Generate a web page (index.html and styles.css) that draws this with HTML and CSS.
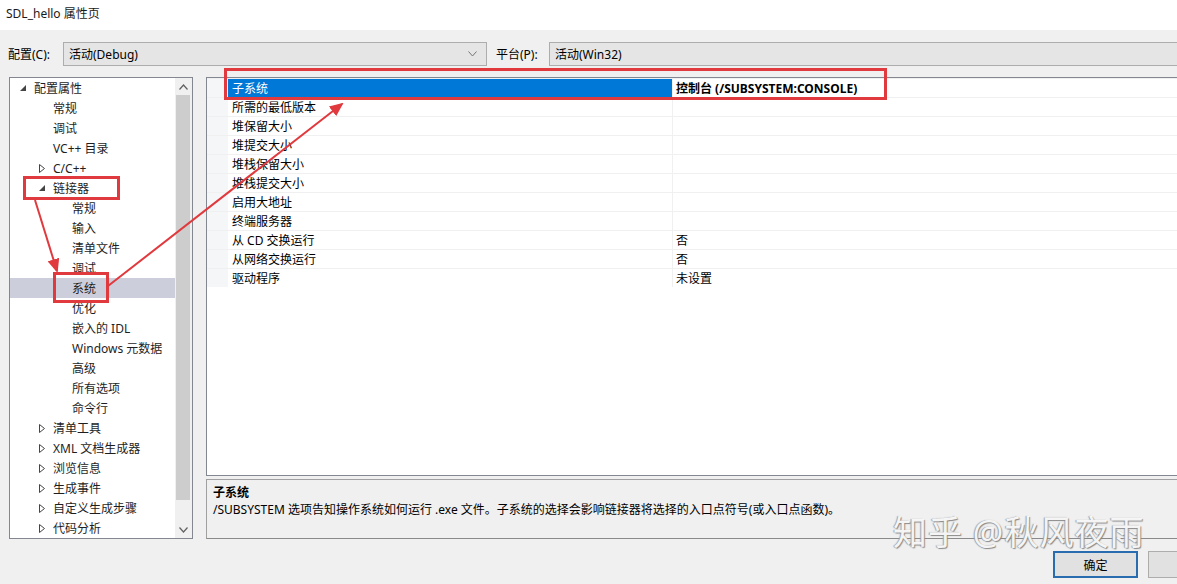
FILE: index.html
```html
<!DOCTYPE html>
<html lang="zh-CN">
<head>
  <meta charset="UTF-8">
  <title>SDL_hello 属性页</title>
  <link rel="stylesheet" href="styles.css">
</head>
<body>
  <div class="titlebar">SDL_hello 属性页</div>

  <div class="dialog">
    <div class="config-row">
      <span class="label">配置(C):</span>
      <div class="combo combo-config">
        <span>活动(Debug)</span>
        <svg class="chev" width="9" height="6" viewBox="0 0 9 6"><polyline points="0.5,0.5 4.5,5 8.5,0.5" fill="none" stroke="#777" stroke-width="1"/></svg>
      </div>
      <span class="label label-platform">平台(P):</span>
      <div class="combo combo-platform"><span>活动(Win32)</span></div>
    </div>

    <div class="main">
      <div class="tree">
        <div class="tree-list">
          <div class="node lv0"><span class="exp"><svg width="7" height="7" viewBox="0 0 7 7"><polygon points="6,0 6,6 0,6" fill="#444"/></svg></span>配置属性</div>
          <div class="node lv1"><span class="exp"></span>常规</div>
          <div class="node lv1"><span class="exp"></span>调试</div>
          <div class="node lv1"><span class="exp"></span>VC++ 目录</div>
          <div class="node lv1"><span class="exp"><svg width="6" height="9" viewBox="0 0 6 9"><polygon points="0.5,0.5 5.5,4.5 0.5,8.5" fill="none" stroke="#444"/></svg></span>C/C++</div>
          <div class="node lv1"><span class="exp"><svg width="7" height="7" viewBox="0 0 7 7"><polygon points="6,0 6,6 0,6" fill="#444"/></svg></span>链接器</div>
          <div class="node lv2"><span class="exp"></span>常规</div>
          <div class="node lv2"><span class="exp"></span>输入</div>
          <div class="node lv2"><span class="exp"></span>清单文件</div>
          <div class="node lv2"><span class="exp"></span>调试</div>
          <div class="node lv2 selected"><span class="exp"></span>系统</div>
          <div class="node lv2"><span class="exp"></span>优化</div>
          <div class="node lv2"><span class="exp"></span>嵌入的 IDL</div>
          <div class="node lv2"><span class="exp"></span>Windows 元数据</div>
          <div class="node lv2"><span class="exp"></span>高级</div>
          <div class="node lv2"><span class="exp"></span>所有选项</div>
          <div class="node lv2"><span class="exp"></span>命令行</div>
          <div class="node lv1"><span class="exp"><svg width="6" height="9" viewBox="0 0 6 9"><polygon points="0.5,0.5 5.5,4.5 0.5,8.5" fill="none" stroke="#444"/></svg></span>清单工具</div>
          <div class="node lv1"><span class="exp"><svg width="6" height="9" viewBox="0 0 6 9"><polygon points="0.5,0.5 5.5,4.5 0.5,8.5" fill="none" stroke="#444"/></svg></span>XML 文档生成器</div>
          <div class="node lv1"><span class="exp"><svg width="6" height="9" viewBox="0 0 6 9"><polygon points="0.5,0.5 5.5,4.5 0.5,8.5" fill="none" stroke="#444"/></svg></span>浏览信息</div>
          <div class="node lv1"><span class="exp"><svg width="6" height="9" viewBox="0 0 6 9"><polygon points="0.5,0.5 5.5,4.5 0.5,8.5" fill="none" stroke="#444"/></svg></span>生成事件</div>
          <div class="node lv1"><span class="exp"><svg width="6" height="9" viewBox="0 0 6 9"><polygon points="0.5,0.5 5.5,4.5 0.5,8.5" fill="none" stroke="#444"/></svg></span>自定义生成步骤</div>
          <div class="node lv1"><span class="exp"><svg width="6" height="9" viewBox="0 0 6 9"><polygon points="0.5,0.5 5.5,4.5 0.5,8.5" fill="none" stroke="#444"/></svg></span>代码分析</div>
        </div>
        <div class="scrollbar">
          <div class="sb-btn"><svg width="9" height="6" viewBox="0 0 9 6"><polyline points="0.5,5.5 4.5,1 8.5,5.5" fill="none" stroke="#606060" stroke-width="1.2"/></svg></div>
          <div class="sb-thumb"></div>
          <div class="sb-track"></div>
          <div class="sb-btn"><svg width="9" height="6" viewBox="0 0 9 6"><polyline points="0.5,0.5 4.5,5 8.5,0.5" fill="none" stroke="#606060" stroke-width="1.2"/></svg></div>
        </div>
      </div>

      <div class="right">
        <div class="grid">
          <div class="row selected"><span class="gutter"></span><span class="name">子系统</span><span class="value">控制台 (/SUBSYSTEM:CONSOLE)</span></div>
          <div class="row"><span class="gutter"></span><span class="name">所需的最低版本</span><span class="value"></span></div>
          <div class="row"><span class="gutter"></span><span class="name">堆保留大小</span><span class="value"></span></div>
          <div class="row"><span class="gutter"></span><span class="name">堆提交大小</span><span class="value"></span></div>
          <div class="row"><span class="gutter"></span><span class="name">堆栈保留大小</span><span class="value"></span></div>
          <div class="row"><span class="gutter"></span><span class="name">堆栈提交大小</span><span class="value"></span></div>
          <div class="row"><span class="gutter"></span><span class="name">启用大地址</span><span class="value"></span></div>
          <div class="row"><span class="gutter"></span><span class="name">终端服务器</span><span class="value"></span></div>
          <div class="row"><span class="gutter"></span><span class="name">从 CD 交换运行</span><span class="value">否</span></div>
          <div class="row"><span class="gutter"></span><span class="name">从网络交换运行</span><span class="value">否</span></div>
          <div class="row"><span class="gutter"></span><span class="name">驱动程序</span><span class="value">未设置</span></div>
        </div>
        <div class="desc">
          <div class="desc-title">子系统</div>
          <div class="desc-text">/SUBSYSTEM 选项告知操作系统如何运行 .exe 文件。子系统的选择会影响链接器将选择的入口点符号(或入口点函数)。</div>
        </div>
      </div>
    </div>

    <div class="footer">
      <button class="btn btn-ok">确定</button>
      <button class="btn"></button>
    </div>
  </div>

  <!-- red annotations drawn over the screenshot -->
  <svg class="marks" width="1177" height="584" viewBox="0 0 1177 584">
    <defs>
      <marker id="head" markerUnits="userSpaceOnUse" markerWidth="14" markerHeight="12" refX="12" refY="6" orient="auto">
        <path d="M0,0 L14,6 L0,12 z" fill="#e0393e"/>
      </marker>
    </defs>
    <rect x="225.5" y="69.5" width="660" height="29" fill="none" stroke="#e0393e" stroke-width="3"/>
    <rect x="24.5" y="177.5" width="94" height="21" fill="none" stroke="#e0393e" stroke-width="3"/>
    <rect x="54.5" y="273.5" width="53" height="28" fill="none" stroke="#e0393e" stroke-width="3"/>
    <line x1="35" y1="200" x2="57" y2="271" stroke="#e0393e" stroke-width="2" marker-end="url(#head)"/>
    <line x1="108" y1="286" x2="342" y2="104" stroke="#e0393e" stroke-width="2" marker-end="url(#head)"/>
  </svg>

  <div class="watermark">知乎 @秋风夜雨</div>
</body>
</html>
```

FILE: styles.css
```css
body {
  margin: 0;
  width: 1177px;
  height: 584px;
  overflow: hidden;
  position: relative;
  background: #f0f0f0;
  font-family: 'Noto Sans', 'Noto Sans CJK SC', sans-serif;
  font-size: 12px;
  color: #000;
}
.titlebar {
  height: 30px;
  line-height: 28px;
  padding-left: 6px;
  background: white;
  color: #1a1a1a;
}
.dialog {
  width: 1225px;
  padding: 12px 0 0 8px;
}
.config-row {
  display: flex;
  align-items: center;
  height: 24px;
}
.label {
  width: 55px;
}
.label-platform {
  width: 53px;
  margin-left: 9px;
}
.combo {
  box-sizing: border-box;
  height: 24px;
  display: flex;
  align-items: center;
  justify-content: space-between;
  padding: 0 9px 0 5px;
  background: #e5e5e5;
  border: 1px solid #adadad;
}
.combo-config {
  width: 424px;
}
.combo-platform {
  flex: 1;
}
.main {
  display: flex;
  margin-top: 11px;
  height: 462px;
}
.tree {
  box-sizing: border-box;
  width: 184px;
  margin-left: 1px;
  display: flex;
  border: 1px solid #828790;
  background: white;
}
.tree-list {
  width: 165px;
  color: #1e1e1e;
}
.node {
  box-sizing: border-box;
  height: 20px;
  padding-top: 2px;
  line-height: 18px;
  white-space: nowrap;
  display: flex;
  align-items: center;
}
.exp {
  width: 14px;
  display: flex;
  align-items: center;
  margin-top: -2px;
}
.lv0 { padding-left: 10px; }
.lv1 { padding-left: 29px; }
.lv2 { padding-left: 48px; }
.node.selected {
  background: #cccedb;
}
.scrollbar {
  width: 17px;
  display: flex;
  flex-direction: column;
  background: #f0f0f0;
}
.sb-btn {
  height: 17px;
  display: flex;
  align-items: center;
  justify-content: center;
}
.sb-thumb {
  height: 405px;
  margin: 0 2px 0 1px;
  background: #cdcdcd;
}
.sb-track {
  flex: 1;
}
.right {
  flex: 1;
  margin-left: 13px;
  display: flex;
  flex-direction: column;
}
.grid {
  box-sizing: border-box;
  height: 399px;
  border: 1px solid #828790;
  border-right: none;
  background: white;
}
.row {
  display: flex;
  height: 18px;
  line-height: 20px;
  border-top: 1px solid #f0f0f0;
}
.gutter {
  width: 21px;
  background: #f5f6f8;
}
.name {
  box-sizing: border-box;
  width: 445px;
  padding-left: 4px;
  border-right: 1px solid #f0f0f0;
}
.value {
  flex: 1;
  padding-left: 3px;
}
.row.selected .name {
  background: #0078d7;
  color: white;
}
.row.selected .value {
  font-weight: bold;
}
.desc {
  box-sizing: border-box;
  height: 60px;
  margin-top: 3px;
  padding: 4px 6px;
  border: 1px solid #a0a0a0;
  border-bottom-color: #8a8a8a;
  border-right: none;
  line-height: 17px;
}
.desc-title {
  font-weight: bold;
}
.footer {
  display: flex;
  justify-content: flex-end;
  gap: 10px;
  margin-top: 12px;
}
.btn {
  box-sizing: border-box;
  width: 85px;
  height: 27px;
  font: inherit;
  background: #e1e1e1;
  border: 1px solid #adadad;
}
.btn-ok {
  border: 2px solid #2a6cb0;
}
.marks {
  position: absolute;
  left: 0;
  top: 0;
  pointer-events: none;
}
.watermark {
  position: absolute;
  left: 893px;
  top: 506px;
  font-size: 34px;
  letter-spacing: 1px;
  color: rgba(255, 255, 255, 0.92);
  text-shadow: 1px 1px 1px #8a8a8a, -1px 0 1px #a0a0a0;
  white-space: nowrap;
}
```
